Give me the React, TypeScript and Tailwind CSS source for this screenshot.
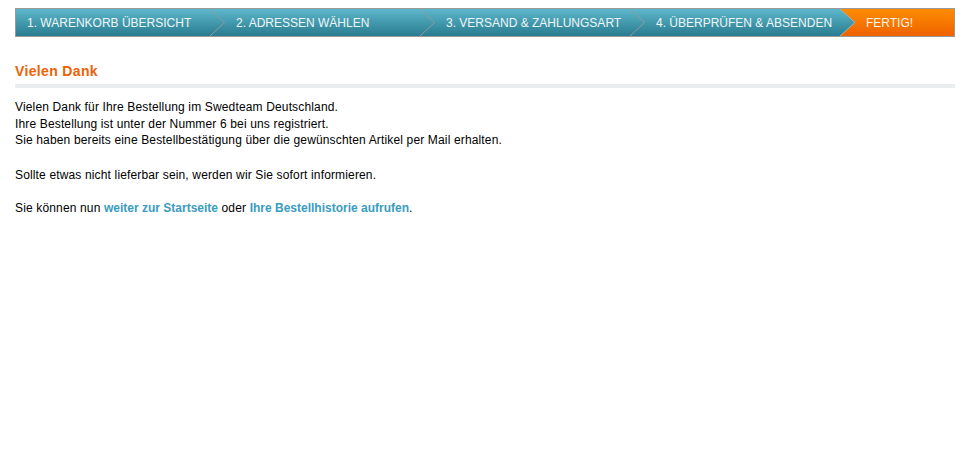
const steps = [
  { label: "1. WARENKORB ÜBERSICHT", w: "w-[209px]" },
  { label: "2. ADRESSEN WÄHLEN", w: "w-[210px]" },
  { label: "3. VERSAND & ZAHLUNGSART", w: "w-[210px]" },
  { label: "4. ÜBERPRÜFEN & ABSENDEN", w: "w-[195px]" },
];

function Chevron() {
  return (
    <svg
      className="absolute right-0 top-0 h-[27px] w-[15px]"
      viewBox="0 0 15 27"
      preserveAspectRatio="none"
    >
      <polyline points="0,0 14.5,13.5 0,27" fill="none" stroke="#8e9ca1" strokeWidth="1" />
    </svg>
  );
}

function TealTip() {
  return (
    <svg className="absolute left-0 top-0 h-[27px] w-[15px]" viewBox="0 0 15 27">
      <defs>
        <linearGradient id="tealtip" x1="0" y1="0" x2="0" y2="1">
          <stop offset="0" stopColor="#5db7cb" />
          <stop offset="1" stopColor="#297c8f" />
        </linearGradient>
      </defs>
      <polygon points="0,0 15,13.5 0,27" fill="url(#tealtip)" />
      <polyline points="0,0 15,13.5 0,27" fill="none" stroke="#9fb4b9" strokeWidth="1" />
    </svg>
  );
}

export default function App() {
  return (
    <div className="min-h-[463px] bg-white font-['Liberation_Sans',Arial,sans-serif] text-[12px] text-black">
      <div className="ml-[15px] mr-[22px] pt-[8px]">
        <nav className="flex h-[29px] border border-[#9a9a9a]">
          {steps.map((s, i) => (
            <div
              key={s.label}
              className={`relative flex h-[27px] shrink-0 items-center bg-gradient-to-b from-[#5db7cb] to-[#297c8f] pl-[11px] text-[#eef6f8] ${s.w}`}
            >
              <span>{s.label}</span>
              {i < 3 && <Chevron />}
            </div>
          ))}
          <div className="relative flex h-[27px] flex-1 items-center bg-gradient-to-b from-[#ff8c00] to-[#ee6200] pl-[26px] text-[#fff4ea]">
            <TealTip />
            <span>FERTIG!</span>
          </div>
        </nav>

        <h1 className="mt-[24px] text-[14px] font-bold leading-[20px] tracking-[0.35px] text-[#ee6206]">
          Vielen Dank
        </h1>
        <div className="mt-[3px] h-[4px] bg-[#e9eded]" />

        <div className="mt-[11px] leading-[16.7px] tracking-[0.15px]">
          <p>
            Vielen Dank für Ihre Bestellung im Swedteam Deutschland.
            <br />
            Ihre Bestellung ist unter der Nummer 6 bei uns registriert.
            <br />
            Sie haben bereits eine Bestellbestätigung über die gewünschten Artikel per Mail erhalten.
          </p>
          <p className="mt-[17.5px]">Sollte etwas nicht lieferbar sein, werden wir Sie sofort informieren.</p>
          <p className="mt-[17px]">
            Sie können nun{" "}
            <a href="#" className="font-bold tracking-normal text-[#3a9cbf]">
              weiter zur Startseite
            </a>{" "}
            oder{" "}
            <a href="#" className="font-bold tracking-normal text-[#3a9cbf]">
              Ihre Bestellhistorie aufrufen
            </a>
            .
          </p>
        </div>
      </div>
    </div>
  );
}
